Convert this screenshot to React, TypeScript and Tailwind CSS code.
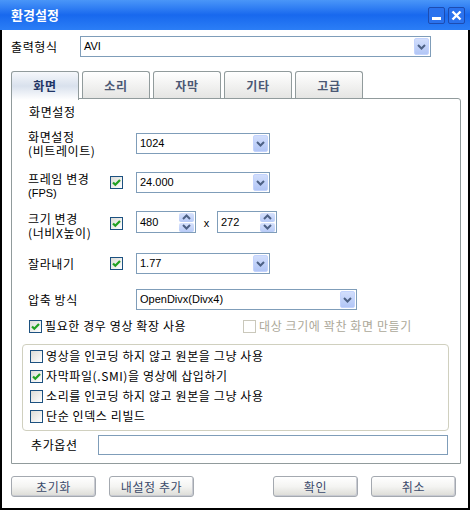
import React from 'react'

const KR = "font-['Noto_Sans_CJK_KR','Noto_Sans',sans-serif]"
const LAT = "font-['Liberation_Sans',Arial,sans-serif] tracking-normal"

function Chevron({ up = false }: { up?: boolean }) {
  return (
    <svg width="9" height="6" viewBox="0 0 9 6" className="block">
      <path
        d={up ? 'M1 5 L4.5 1.5 L8 5' : 'M1 1 L4.5 4.5 L8 1'}
        fill="none"
        stroke="#4d6185"
        strokeWidth="2"
      />
    </svg>
  )
}

function Combo({ value, w }: { value: string; w: string }) {
  return (
    <div className={`flex h-[21px] shrink-0 items-center border border-[#7f9db9] bg-white ${w}`}>
      <span className={`flex-1 pl-[3px] text-[11px] leading-none text-black ${LAT}`}>{value}</span>
      <span className="mr-px flex h-[17px] w-[15px] items-center justify-center rounded-[2px] border border-[#c3d3fd] bg-gradient-to-b from-[#d2defc] to-[#b2c6f6]">
        <Chevron />
      </span>
    </div>
  )
}

function Spin({ value }: { value: string }) {
  return (
    <div className="flex h-[22px] w-[60px] shrink-0 items-center border border-[#7f9db9] bg-white">
      <span className={`flex-1 pl-[3px] text-[11px] leading-none text-black ${LAT}`}>{value}</span>
      <span className="mr-px flex w-[15px] flex-col gap-px">
        <span className="flex h-[9px] items-center justify-center rounded-[2px] bg-gradient-to-b from-[#d6e1fc] to-[#b8cbf7]">
          <Chevron up />
        </span>
        <span className="flex h-[9px] items-center justify-center rounded-[2px] bg-gradient-to-b from-[#d6e1fc] to-[#b8cbf7]">
          <Chevron />
        </span>
      </span>
    </div>
  )
}

function Check({ on = false, disabled = false }: { on?: boolean; disabled?: boolean }) {
  return (
    <span
      className={`flex h-[13px] w-[13px] shrink-0 items-center justify-center border ${
        disabled ? 'border-[#cac8bb] bg-white' : 'border-[#1c5180] bg-gradient-to-br from-[#dcdcd7] to-white'
      }`}
    >
      {on && (
        <svg width="11" height="11" viewBox="0 0 11 11">
          <path d="M2 5.5 L4.3 7.8 L9 3" fill="none" stroke="#21a121" strokeWidth="2.2" />
        </svg>
      )}
    </span>
  )
}

function Btn({ label }: { label: string }) {
  return (
    <button className="flex h-[21px] w-[85px] items-center justify-center rounded-[3px] border border-[#a4a9b0] bg-gradient-to-b from-white via-[#f4f4f2] to-[#dcdcd6] shadow-[inset_-1px_-1px_0_#c9cbd2]">
      <span className={`text-[12px] leading-none text-[#3b4a6b] ${KR}`}>{label}</span>
    </button>
  )
}

const TABS = ['화면', '소리', '자막', '기타', '고급']

export default function App() {
  return (
    <div className={`flex h-[510px] w-[470px] flex-col bg-white tracking-[0.6px] ${KR}`}>
      {/* title bar */}
      <div className="flex h-[30px] shrink-0 items-center bg-gradient-to-b from-[#4a96f8] via-[#1868ee] to-[#2b7ef6] pl-[11px] pr-[5px]">
        <span className="flex-1 text-[13px] font-bold tracking-normal text-white">환경설정</span>
        <div className="flex gap-[3px]">
          <span className="flex h-[17px] w-[17px] items-end justify-center rounded-[2px] border border-[#1d4cb0] bg-[#2a72ee] pb-[3px]">
            <span className="h-[3px] w-[9px] bg-white" />
          </span>
          <span className="flex h-[17px] w-[17px] items-center justify-center rounded-[2px] border border-[#1d4cb0] bg-[#2a72ee]">
            <svg width="11" height="11" viewBox="0 0 11 11">
              <path d="M1.5 1.5 L9.5 9.5 M9.5 1.5 L1.5 9.5" stroke="white" strokeWidth="2.4" />
            </svg>
          </span>
        </div>
      </div>

      {/* body */}
      <div className="flex flex-1 flex-col border-x-2 border-b-2 border-black">
        <div className="mt-[6px] flex h-[21px] items-center pl-[9px]">
          <span className="w-[69px] text-[12px] leading-none text-black">출력형식</span>
          <Combo value="AVI" w="w-[351px]" />
        </div>

        {/* tabs */}
        <div className="mt-[14px] flex h-[28px] items-start gap-[3px] pl-[9px]">
          {TABS.map((t, i) =>
            i === 0 ? (
              <div
                key={t}
                className="relative z-10 flex h-[29px] w-[68px] items-center justify-center rounded-t-[3px] border border-b-0 border-[#919b9c] bg-gradient-to-b from-[#f6f8fb] via-[#d9e1ed] to-white"
              >
                <span className="text-[12px] font-bold leading-none text-[#1f3565]">{t}</span>
              </div>
            ) : (
              <div
                key={t}
                className="flex h-[28px] w-[68px] items-center justify-center rounded-t-[3px] border border-b-0 border-[#919b9c] bg-gradient-to-b from-white to-[#e4e4e2]"
              >
                <span className="text-[12px] font-bold leading-none text-[#4b5874]">{t}</span>
              </div>
            ),
          )}
        </div>

        {/* panel */}
        <div className="-mt-px ml-[9px] flex h-[366px] w-[450px] flex-col rounded-tr-[3px] border border-[#919b9c] bg-white pl-[16px] pt-[5px] text-[12px] text-black">
          <div className="ml-px h-[16px] leading-[16px]">화면설정</div>

          <div className="mt-[10px] flex items-start">
            <div className="w-[82px] leading-[14px]">
              <div>화면설정</div>
              <div>(비트레이트)</div>
            </div>
            <div className="ml-[26px] mt-[3px]">
              <Combo value="1024" w="w-[134px]" />
            </div>
          </div>

          <div className="mt-[14px] flex items-start">
            <div className="w-[82px] leading-[14px]">
              <div>프레임 변경</div>
              <div className={`text-[11px] ${LAT}`}>(FPS)</div>
            </div>
            <div className="flex h-[21px] w-[26px] items-center">
              <Check on />
            </div>
            <Combo value="24.000" w="w-[134px]" />
          </div>

          <div className="mt-[11px] flex items-start">
            <div className="mt-[1px] w-[82px] leading-[14px]">
              <div>크기 변경</div>
              <div>(너비X높이)</div>
            </div>
            <div className="flex h-[22px] w-[26px] items-center pt-[3px]">
              <Check on />
            </div>
            <Spin value="480" />
            <span className={`w-[21px] text-center text-[11px] ${LAT}`}>
              <span className="relative top-[4px]">x</span>
            </span>
            <Spin value="272" />
          </div>

          <div className="mt-[13px] flex h-[21px] items-center">
            <div className="w-[82px] leading-[14px]">잘라내기</div>
            <div className="flex w-[26px] items-center">
              <Check on />
            </div>
            <Combo value="1.77" w="w-[134px]" />
          </div>

          <div className="mt-[15px] flex h-[21px] items-center">
            <div className="w-[108px] leading-[14px]">압축 방식</div>
            <Combo value="OpenDivx(Divx4)" w="w-[221px]" />
          </div>

          <div className="ml-px mt-[8px] flex h-[16px] items-center">
            <Check on />
            <span className="ml-[3px] w-[198px]">필요한 경우 영상 확장 사용</span>
            <Check disabled />
            <span className="ml-[3px] text-[#aca899]">대상 크기에 꽉찬 화면 만들기</span>
          </div>

          <div className="-ml-[6px] mt-[10px] flex h-[87px] w-[427px] flex-col rounded-[4px] border border-[#d0d0bf] pt-px">
            {[
              ['영상을 인코딩 하지 않고 원본을 그냥 사용', false],
              ['자막파일(.SMI)을 영상에 삽입하기', true],
              ['소리를 인코딩 하지 않고 원본을 그냥 사용', false],
              ['단순 인덱스 리빌드', false],
            ].map(([label, on]) => (
              <div key={label as string} className="flex h-[20px] items-center pl-[7px]">
                <Check on={on as boolean} />
                <span className="ml-[3px]">{label as string}</span>
              </div>
            ))}
          </div>

          <div className="ml-[3px] mt-[4px] flex h-[20px] items-center">
            <span className="w-[67px]">추가옵션</span>
            <div className="h-[20px] w-[350px] border border-[#7f9db9] bg-white" />
          </div>
        </div>

        {/* footer buttons */}
        <div className="mt-[12px] flex pl-[9px]">
          <Btn label="초기화" />
          <div className="ml-[13px]">
            <Btn label="내설정 추가" />
          </div>
          <div className="ml-[79px]">
            <Btn label="확인" />
          </div>
          <div className="ml-[13px]">
            <Btn label="취소" />
          </div>
        </div>
      </div>
    </div>
  )
}
